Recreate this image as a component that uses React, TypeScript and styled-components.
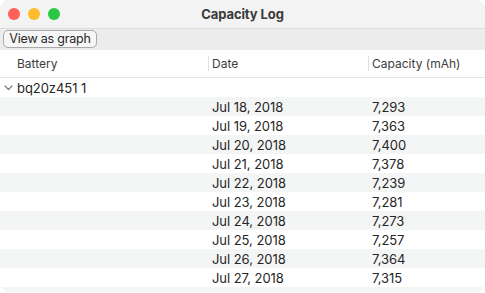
import React from "react";
import styled, { createGlobalStyle } from "styled-components";

const Global = createGlobalStyle`
  html, body { margin: 0; padding: 0; background: #ffffff; }
  body { font-family: Inter, "Noto Sans", "Liberation Sans", sans-serif; -webkit-font-smoothing: antialiased; }
`;

const Window = styled.div`
  width: 485px;
  height: 292px;
  border-radius: 10px;
  overflow: hidden;
  display: flex;
  flex-direction: column;
  background: #ffffff;
  box-shadow: inset 0 0 0 0.5px #d8d8d8;
`;

const TitleBar = styled.div`
  height: 28px;
  flex: none;
  display: flex;
  align-items: center;
  position: relative;
  background: #f3f3f3;
`;

const Lights = styled.div`
  display: flex;
  gap: 8px;
  padding-left: 8px;
`;

const Light = styled.span<{ $c: string }>`
  width: 12px;
  height: 12px;
  border-radius: 50%;
  background: ${(p) => p.$c};
`;

const Title = styled.div`
  position: absolute;
  left: 0;
  right: 0;
  top: 0;
  bottom: 0;
  display: flex;
  align-items: center;
  justify-content: center;
  font-size: 13px;
  font-weight: 700;
  color: #3a3a3a;
  letter-spacing: -0.1px;
  pointer-events: none;
`;

const Toolbar = styled.div`
  height: 22px;
  flex: none;
  box-sizing: border-box;
  border-top: 1px solid #dedede;
  background: #ececec;
  display: flex;
  align-items: center;
  padding-left: 3px;
`;

const Button = styled.button`
  height: 18px;
  width: 94px;
  box-sizing: border-box;
  padding: 0;
  font-family: inherit;
  font-size: 12.5px;
  color: #262626;
  background: #f6f6f6;
  border: 1px solid #a9a9a9;
  border-radius: 5px;
  line-height: 16px;
  letter-spacing: -0.2px;
  margin-top: -1px;
`;

const Table = styled.div`
  flex: 1;
  display: flex;
  flex-direction: column;
  overflow: hidden;
  background: #ffffff;
`;

const HeaderRow = styled.div`
  height: 28px;
  flex: none;
  box-sizing: border-box;
  border-bottom: 1px solid #e4e4e4;
  display: grid;
  grid-template-columns: 208px 160px 1fr;
  align-items: center;
  font-size: 12px;
  color: #3c3c3c;
`;

const HeaderCell = styled.div<{ $sep?: boolean; $pad: number }>`
  height: 15px;
  display: flex;
  align-items: center;
  padding-left: ${(p) => p.$pad}px;
  border-left: ${(p) => (p.$sep ? "1px solid #e0e0e0" : "none")};
`;

const Row = styled.div<{ $alt?: boolean }>`
  height: 19px;
  flex: none;
  display: grid;
  grid-template-columns: 208px 160px 1fr;
  align-items: center;
  font-size: 13px;
  color: #262626;
  background: ${(p) => (p.$alt ? "#f4f5f5" : "#ffffff")};
  letter-spacing: -0.05px;
`;

const Cell = styled.div<{ $pad: number }>`
  padding-left: ${(p) => p.$pad}px;
  white-space: nowrap;
  display: flex;
  align-items: center;
`;

const Chevron = styled.svg`
  width: 9px;
  height: 6px;
  margin-left: -13px;
  margin-right: 4px;
`;

const data: [string, string][] = [
  ["Jul 18, 2018", "7,293"],
  ["Jul 19, 2018", "7,363"],
  ["Jul 20, 2018", "7,400"],
  ["Jul 21, 2018", "7,378"],
  ["Jul 22, 2018", "7,239"],
  ["Jul 23, 2018", "7,281"],
  ["Jul 24, 2018", "7,273"],
  ["Jul 25, 2018", "7,257"],
  ["Jul 26, 2018", "7,364"],
  ["Jul 27, 2018", "7,315"],
  ["Jul 28, 2018", "7,344"],
];

export default function App() {
  return (
    <>
      <Global />
      <Window>
        <TitleBar>
          <Lights>
            <Light $c="#fe5f57" />
            <Light $c="#febc2e" />
            <Light $c="#28c840" />
          </Lights>
          <Title>Capacity Log</Title>
        </TitleBar>
        <Toolbar>
          <Button>View as graph</Button>
        </Toolbar>
        <Table>
          <HeaderRow>
            <HeaderCell $pad={17}>Battery</HeaderCell>
            <HeaderCell $sep $pad={3}>Date</HeaderCell>
            <HeaderCell $sep $pad={3}>Capacity (mAh)</HeaderCell>
          </HeaderRow>
          <Row>
            <Cell $pad={17}>
              <Chevron viewBox="0 0 9 6">
                <path d="M1 1 L4.5 4.5 L8 1" fill="none" stroke="#7a7a7a" strokeWidth="1.2" strokeLinecap="round" strokeLinejoin="round" />
              </Chevron>
              bq20z451 1
            </Cell>
            <Cell $pad={0} />
            <Cell $pad={0} />
          </Row>
          {data.map(([d, v], i) => (
            <Row key={d} $alt={i % 2 === 0}>
              <Cell $pad={0} />
              <Cell $pad={4}>{d}</Cell>
              <Cell $pad={4}>{v}</Cell>
            </Row>
          ))}
        </Table>
      </Window>
    </>
  );
}
